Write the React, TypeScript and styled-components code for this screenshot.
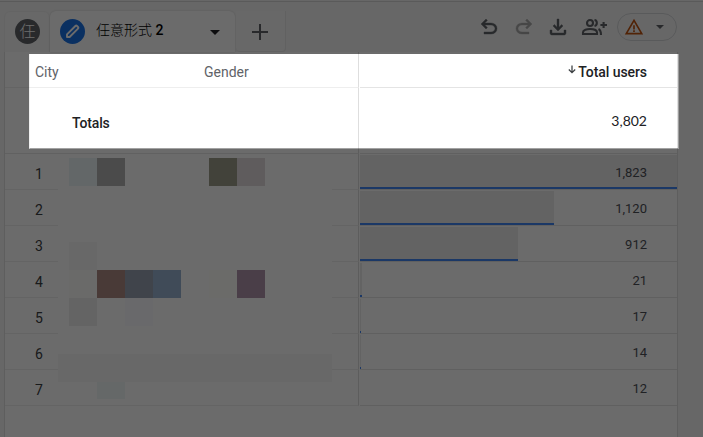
import React from 'react';
import styled, { createGlobalStyle } from 'styled-components';

const GlobalStyle = createGlobalStyle`
  * { box-sizing: border-box; }
  body { margin: 0; overflow: hidden; }
`;

const Page = styled.main`
  position: relative;
  width: 703px;
  height: 437px;
  padding: 1px 0 0 4px;
  overflow: hidden;
  background: #f6f6f6;
  color: #202124;
  font: 400 14px/20px Roboto, "Noto Sans CJK TC", sans-serif;
`;

const TopRule = styled.div`
  height: 1px;
  margin-left: -4px;
  background: #d6d6d6;
`;

const Header = styled.header`
  display: flex;
  height: 50px;
  padding-top: 9px;
`;

const Tab = styled.div<{ $width: number; $active?: boolean }>`
  display: flex;
  align-items: center;
  width: ${p => p.$width}px;
  height: 41px;
  border: solid ${p => (p.$active ? '#fff' : '#eeeeee')};
  border-width: 1px 1px 0;
  border-radius: 6px 6px 0 0;
  background: ${p => (p.$active ? '#fff' : '#f7f7f7')};
  box-shadow: ${p => (p.$active ? '0 0 2px #ccc' : 'none')};
`;

const AddTab = styled.button`
  display: flex;
  align-items: center;
  justify-content: center;
  width: 50px;
  height: 41px;
  margin-left: 1px;
  padding: 2px 1px 0 0;
  border: solid #e6e6e6;
  border-width: 0 1px 1px 0;
  border-radius: 0 0 4px 4px;
  background: #f7f7f7;
`;

const Avatar = styled.span<{ $color: string; $left: number }>`
  display: flex;
  align-items: center;
  justify-content: center;
  flex: none;
  width: 25px;
  height: 25px;
  margin: 0 0 1px ${p => p.$left}px;
  border-radius: 50%;
  background: ${p => p.$color};
  color: #fff;
  font-weight: 300;
  font-size: 16px;
`;

const TabName = styled.span`
  width: 114px;
  margin: 0 0 4px 11px;
  color: #000;
  font-weight: 300;
  white-space: nowrap;
  b { font-weight: 500; }
`;

const Tools = styled.div`
  display: flex;
  align-items: center;
  height: 30px;
  margin: 1px 26px 0 auto;
`;

const Tool = styled.span<{ $gap?: number; $tone?: string }>`
  display: flex;
  margin-right: ${p => p.$gap || 0}px;
  color: ${p => p.$tone || '#5f6368'};
`;

const WarningPill = styled.span`
  display: flex;
  align-items: center;
  justify-content: space-between;
  width: 60px;
  height: 28px;
  padding: 0 12px 0 6px;
  border: 1px solid #d4d6d9;
  border-radius: 14px;
  color: #5f6368;
`;

const Table = styled.section`
  width: 674px;
  height: 385px;
  border: solid #dfdfdf;
  border-width: 0 1px;
  background: #fff;
`;

const Row = styled.div<{ $height: number }>`
  display: grid;
  grid-template-columns: 354px 318px;
  height: ${p => p.$height}px;
`;

const Dimensions = styled.div<{ $line?: string }>`
  display: flex;
  align-items: center;
  padding: 4px 0 0 30px;
  border-right: 1px solid #dedede;
  border-bottom: 1px solid ${p => p.$line || '#eeeeee'};
  color: #3c4043;
`;

const Heading = styled.span<{ $width: number }>`
  width: ${p => p.$width}px;
  color: #5f6368;
`;

const TotalLabel = styled.span`
  padding: 1px 0 0 37px;
  color: #202124;
  font-weight: 500;
  letter-spacing: -0.15px;
`;

const Metric = styled.div`
  display: grid;
  grid-template-columns: 1fr;
  align-items: center;
  margin-left: 1px;
  border-bottom: 1px solid #e4e4e4;
`;

const MetricHeading = styled.div`
  display: flex;
  justify-content: flex-end;
  padding: 4px 30px 0 0;
  font-weight: 500;
  letter-spacing: -0.06px;
  svg { margin: 2px 1px 0 0; }
`;

const Grand = styled.div`
  padding: 1px 30px 0 0;
  text-align: right;
  font: 400 14px/20px Lato, sans-serif;
`;

const Bar = styled.div`
  grid-area: 1 / 1;
  align-self: end;
  height: 34px;
  border-bottom: 2px solid #4285f4;
  background: #ebebeb;
`;

const Value = styled.div`
  grid-area: 1 / 1;
  z-index: 1;
  padding: 2px 30px 0 0;
  font-size: 13px;
  text-align: right;
`;

/* Redaction blocks lie over the city and gender names. */
const Mosaic = styled.div`
  position: absolute;
  left: 58px;
  top: 158px;
  display: grid;
  grid-template-columns: 11px repeat(9, 28px) 11px;
  grid-template-rows: repeat(8, 28px) 17px;
  width: 274px;
  background: #fff;
`;

const Block = styled.i<{ $column: string; $row: number; $color: string }>`
  grid-column: ${p => p.$column};
  grid-row: ${p => p.$row};
  background: ${p => p.$color};
`;

/* The oversized shadow dims everything outside the highlighted rows. */
const Spotlight = styled.div`
  position: absolute;
  left: 29px;
  top: 54px;
  width: 650px;
  height: 95px;
  border: solid;
  border-width: 0 1px 1px;
  border-color: transparent rgba(0,0,0,.36) rgba(0,0,0,.36) rgba(0,0,0,.06);
  box-shadow: 0 0 0 1000px rgba(0,0,0,.58);
`;

const paths = {
  undo: 'M280-200v-80h284q63 0 109.5-40T720-420q0-60-46.5-100T564-560H312l104 104-56 56-200-200 200-200 56 56-104 104h252q97 0 167 63t70 157q0 94-70 157t-167 63H280Z',
  redo: 'M396-200q-97 0-167-63t-70-157q0-94 70-157t167-63h252L544-744l56-56 200 200-200 200-56-56 104-104H396q-63 0-109.5 40T240-420q0 60 46.5 100T396-280h284v80H396Z',
  download: 'M480-320 280-520l56-58 104 104v-326h80v326l104-104 56 58-200 200ZM240-160q-33 0-56.5-23.5T160-240v-120h80v120h480v-120h80v120q0 33-23.5 56.5T720-160H240Z',
  warning: 'm40-120 440-760 440 760H40Zm138-80h604L480-720 178-200Zm262-40h80v-80h-80v80Zm0-120h80v-200h-80v200Z',
};

const Symbol = ({ name, size = 24, weight = 15 }: { name: keyof typeof paths; size?: number; weight?: number }) => (
  <svg width={size} height={size} viewBox="0 -960 960 960" fill="currentColor" stroke="currentColor" strokeWidth={weight}>
    <path d={paths[name]} />
  </svg>
);

const Caret = ({ width = 8 }: { width?: number }) => (
  <svg width={width} height={width / 2} viewBox="0 0 10 5" fill="currentColor"><path d="M0 0h10L5 5z" /></svg>
);

const AddPeople = () => (
  <svg width="26" height="24" viewBox="0 0 26 24" fill="none" stroke="currentColor" strokeWidth="2.1">
    <circle cx="9" cy="8" r="3" />
    <path d="M2 19v-1.8C2 14.8 6 14 9 14s7 .8 7 3.2V19zM13.5 5c2.8.3 3.4 5.2 0 6M17.5 14c2 1 2.5 2.5 2.5 6M22.6 7v6M19.4 10H26" />
  </svg>
);

const rows = [
  { value: '1,823', bar: 317 },
  { value: '1,120', bar: 194 },
  { value: '912', bar: 158 },
  { value: '21', bar: 2 },
  { value: '17', bar: 1 },
  { value: '14', bar: 1 },
  { value: '12', bar: 0 },
];

const blocks: [string, number, string][] = [
  ['2', 1, '#ecf5f7'], ['3', 1, '#b3b3b3'], ['7', 1, '#9d9d8a'], ['8', 1, '#e2dbdd'],
  ['2', 4, '#f8f8f8'],
  ['2', 5, '#fdfdf9'], ['3', 5, '#ae8a83'], ['4', 5, '#98a2b3'], ['5', 5, '#98b3d2'], ['7', 5, '#fefefa'], ['8', 5, '#b094ab'],
  ['2', 6, '#eeeeee'], ['4', 6, '#fafbfe'],
  ['1 / -1', 8, '#f8f8f8'],
  ['3', 9, '#f0f7f8'],
];

export default function App() {
  return (
    <Page>
      <GlobalStyle />
      <TopRule />
      <Header>
        <Tab $width={46}><Avatar $color="#5f6368" $left={10}>任</Avatar></Tab>
        <Tab $width={185} $active>
          <Avatar $color="#1a73e8" $left={9}>
            <svg width="15" height="15" viewBox="0 0 15 15" fill="none" stroke="#fff" strokeWidth="1.9" strokeLinejoin="round">
              <path d="M2 13v-2.6L10.4 2q.8-.8 1.6 0l1 1q.8.8 0 1.6L4.6 13z" />
            </svg>
          </Avatar>
          <TabName>任意形式 <b>2</b></TabName>
          <Caret width={10} />
        </Tab>
        <AddTab>
          <svg width="18" height="18" viewBox="0 0 18 18" stroke="#5f6368" strokeWidth="2"><path d="M9 1v16M1 9h16" /></svg>
        </AddTab>
        <Tools>
          <Tool $gap={11}><Symbol name="undo" /></Tool>
          <Tool $gap={10} $tone="#a9a9a9"><Symbol name="redo" /></Tool>
          <Tool $gap={11}><Symbol name="download" /></Tool>
          <Tool $gap={10}><AddPeople /></Tool>
          <WarningPill>
            <Tool $tone="#c0530f"><Symbol name="warning" size={20} weight={0} /></Tool>
            <Caret />
          </WarningPill>
        </Tools>
      </Header>
      <Table>
        <Row $height={36}>
          <Dimensions><Heading $width={169}>City</Heading><Heading $width={100}>Gender</Heading></Dimensions>
          <Metric>
            <MetricHeading>
              <svg width="10" height="11" viewBox="0 0 11 11" fill="none" stroke="#3c4043" strokeWidth="1.4"><path d="M5.5 1v8M2 5.5 5.5 9 9 5.5" /></svg>
              Total users
            </MetricHeading>
          </Metric>
        </Row>
        <Row $height={66}>
          <Dimensions $line="#e8e8e8"><TotalLabel>Totals</TotalLabel></Dimensions>
          <Metric><Grand>3,802</Grand></Metric>
        </Row>
        {rows.map((row, i) => (
          <Row key={row.value} $height={36}>
            <Dimensions>{i + 1}</Dimensions>
            <Metric>
              {row.bar > 0 && <Bar style={{ width: row.bar }} />}
              <Value>{row.value}</Value>
            </Metric>
          </Row>
        ))}
      </Table>
      <Mosaic>
        {blocks.map(([column, row, color]) => <Block key={column + row} $column={column} $row={row} $color={color} />)}
      </Mosaic>
      <Spotlight />
    </Page>
  );
}
